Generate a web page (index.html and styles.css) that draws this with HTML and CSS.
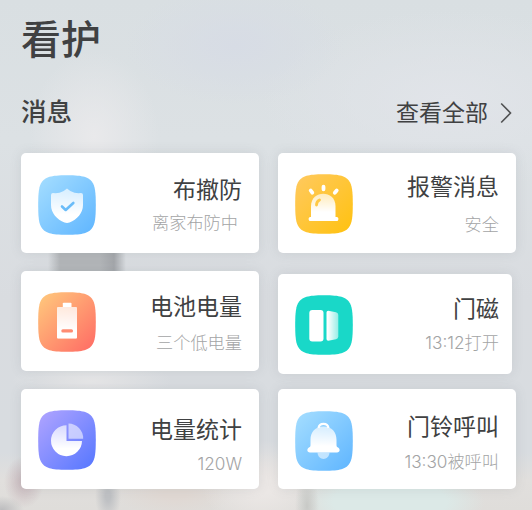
FILE: index.html
```html
<!DOCTYPE html>
<html lang="zh-CN">
<head>
<meta charset="utf-8">
<title>看护</title>
<link rel="stylesheet" href="styles.css">
</head>
<body>
<svg class="defs" width="0" height="0" aria-hidden="true">
  <defs>
    <path id="tile" d="M29 .2C46 .2 50.300 2.300 53.800 6.500C57.200 10.700 57.800 18 57.800 30S57.200 49.300 53.800 53.500C50.300 57.700 46 59.800 29 59.800S7.700 57.700 4.200 53.500C.8 49.300 .2 42 .2 30S.8 10.700 4.200 6.500C7.700 2.300 12 .2 29 .2Z"/>
    <linearGradient id="blue" x1="0" y1="0" x2="1" y2="1"><stop offset=".05" stop-color="#a2dcff"/><stop offset=".95" stop-color="#62b7ff"/></linearGradient>
    <linearGradient id="yellow" x1="0" y1="0" x2="1" y2="1"><stop offset=".05" stop-color="#ffc95c"/><stop offset=".95" stop-color="#ffc213"/></linearGradient>
    <linearGradient id="orange" x1="0" y1="0" x2="1" y2="1"><stop offset=".08" stop-color="#ffc37b"/><stop offset=".92" stop-color="#ff7166"/></linearGradient>
    <linearGradient id="violet" x1="0" y1="0" x2="1" y2="1"><stop offset=".08" stop-color="#aaa1ff"/><stop offset=".92" stop-color="#5c7aff"/></linearGradient>
    <linearGradient id="fade" x1="0" y1="0" x2="0" y2="1"><stop offset="0" stop-color="#fff" stop-opacity=".65"/><stop offset=".75" stop-color="#fff"/></linearGradient>
    <linearGradient id="fade-side"><stop offset=".1" stop-color="#fff"/><stop offset="1" stop-color="#fff" stop-opacity=".55"/></linearGradient>
  </defs>
</svg>
<main class="page">
  <h1 class="page-title">看护</h1>
  <header class="section-head">
    <h2 class="section-title">消息</h2>
    <a class="more"><span>查看全部</span><svg class="chevron" viewBox="0 0 12 22"><path d="M1.200 1.500L10.500 11L1.200 20.500"/></svg></a>
  </header>
  <section class="cards">
    <article class="card arm">
      <svg class="icon" viewBox="0 0 58 60"><use href="#tile" fill="url(#blue)"/><path fill="url(#fade)" d="M29 13.500Q32 16.500 36.500 17.700Q39.500 18.400 43 18Q45 18 45 20V30C45 38 39 44.500 31.500 47.500Q29 48.400 26.500 47.500C19 44.500 13 38 13 30V20Q13 18 15 18Q18.500 18.400 21.500 17.700Q26 16.500 29 13.500Z"/><path fill="none" stroke="#6abcf9" stroke-width="2.600" stroke-linecap="round" stroke-linejoin="round" d="M24 31.500L27.700 35L35.300 28"/></svg>
      <div class="text"><h3>布撤防</h3><p>离家布防中</p></div>
    </article>
    <article class="card alarm">
      <svg class="icon" viewBox="0 0 58 60"><use href="#tile" fill="url(#yellow)"/><path fill="url(#fade)" d="M16 44V32C16 15.500 40.500 15.500 40.500 32V44Z"/><rect x="13.700" y="43" width="29.600" height="4" rx="1.500" fill="#fff"/><path fill="none" stroke="#fff" stroke-width="3.800" stroke-linecap="round" d="M28.500 12.700V15.300M15.700 16.500L17.300 18.700M41.700 16.500L39.800 18.700"/><path fill="none" stroke="#ffc945" stroke-width="2.800" stroke-linecap="round" d="M21.500 31Q21.500 27.500 24.500 26"/></svg>
      <div class="text"><h3>报警消息</h3><p>安全</p></div>
    </article>
    <article class="card battery">
      <svg class="icon" viewBox="0 0 58 60"><use href="#tile" fill="url(#orange)"/><path fill="#fff" d="M25.700 10.700H32.600Q33.500 10.700 33.500 11.600V15H24.800V11.600Q24.800 10.700 25.700 10.700Z"/><rect x="19" y="15" width="20" height="31.500" rx="1" fill="#fff" fill-opacity=".3"/><rect x="19" y="15" width="20" height="31.500" rx="1" fill="url(#fade)"/><rect x="23.300" y="37.300" width="11.700" height="3.200" rx="1.500" fill="#ff8c72"/></svg>
      <div class="text"><h3>电池电量</h3><p>三个低电量</p></div>
    </article>
    <article class="card door">
      <svg class="icon" viewBox="0 0 58 60"><use href="#tile" fill="#19d8c8"/><rect x="14.300" y="15" width="14.200" height="31.500" rx="3" fill="#fff"/><path fill="url(#fade-side)" d="M33.300 15.800L41 17.200Q43.300 17.700 43.300 20V41.500Q43.300 43.700 41 44.200L33.300 45.700Q31.500 45.700 31.500 44V17.500Q31.500 15.800 33.300 15.800Z"/></svg>
      <div class="text"><h3>门磁</h3><p>13:12打开</p></div>
    </article>
    <article class="card usage">
      <svg class="icon" viewBox="0 0 58 60"><use href="#tile" fill="url(#violet)"/><path fill="url(#fade)" d="M28.500 15.200V31H44A15.500 15.500 0 1 1 28.500 15.200Z"/><path fill="#fff" fill-opacity=".56" d="M30.500 13.500A14.800 15 0 0 1 45.200 28.700H30.500Z"/></svg>
      <div class="text"><h3>电量统计</h3><p>120W</p></div>
    </article>
    <article class="card bell">
      <svg class="icon" viewBox="0 0 58 60"><use href="#tile" fill="url(#blue)"/><path fill="none" stroke="#fff" stroke-width="2.200" d="M23.500 17C24.500 11.600 32.500 11.600 33.500 17"/><path fill="#fff" fill-opacity=".55" d="M22.500 41.500H34.500C34 50 23 50 22.500 41.500Z"/><path fill="url(#fade)" d="M28.500 15.500C37 15.500 41.500 21 41.500 29V34.500Q41.500 35.800 43 36.500C45.300 37.500 45.300 41.500 42 41.500H15C11.700 41.500 11.700 37.500 14 36.500Q15.500 35.800 15.500 34.500V29C15.500 21 20 15.500 28.500 15.500Z"/></svg>
      <div class="text"><h3>门铃呼叫</h3><p>13:30被呼叫</p></div>
    </article>
  </section>
</main>
</body>
</html>
```
FILE: styles.css
```css
* {
  box-sizing: border-box;
}

body {
  margin: 0;
  color: #404142;
  font-family: Inter, "Noto Sans CJK SC", sans-serif;
}

h1, h2, h3, p {
  margin: 0;
  font-weight: 400;
}

.defs {
  position: absolute;
}

/* Out-of-focus room photo behind the cards */
.page {
  height: 510px;
  padding: 12px 15px 0 21px;
  overflow: hidden;
  background:
    radial-gradient(ellipse 20px 26px at 24px 482px, rgba(178, 150, 160, .55) 0%, rgba(178, 150, 160, 0) 100%),
    radial-gradient(ellipse 22px 14px at 2px 510px, #bcbcbe 0%, rgba(188, 188, 190, 0) 100%),
    radial-gradient(ellipse 13px 26px at 108px 496px, #bfc1c4 20%, rgba(191, 193, 196, 0) 100%),
    radial-gradient(ellipse 12px 34px at 307px 506px, #c8c9c6 0%, rgba(200, 201, 198, 0) 100%),
    radial-gradient(ellipse 95px 34px at 390px 502px, #dce9e7 60%, rgba(220, 233, 231, 0) 100%),
    radial-gradient(ellipse 60px 45px at 262px 485px, #ebe7e5 20%, rgba(235, 231, 229, 0) 100%),
    radial-gradient(ellipse 60px 22px at 175px 494px, #e0d8d3 20%, rgba(224, 216, 211, 0) 100%),
    linear-gradient(90deg, rgba(175, 179, 182, 0) 48px, #b3b6b9 60px, #b3b6b9 100px, #a4a7ab 114px, rgba(164, 167, 171, 0) 126px) 0 225px / 100% 60px no-repeat,
    radial-gradient(ellipse 65px 85px at 94px 136px, #e9e9eb 0%, rgba(233, 233, 235, 0) 100%),
    radial-gradient(ellipse 80px 20px at 92px 381px, #e7e7e8 0%, rgba(231, 231, 232, 0) 100%),
    radial-gradient(ellipse 110px 60px at 235px 45px, #d7dce5 0%, rgba(215, 220, 229, 0) 100%),
    radial-gradient(ellipse 190px 90px at 450px 100px, #e1e4e9 0%, rgba(225, 228, 233, 0) 100%),
    linear-gradient(180deg, rgba(225, 223, 221, 0) 452px, #e1dfdd 480px, #dfddda 510px),
    linear-gradient(180deg, #d9dfe2 0, #dce1e4 140px, #d9dce0 300px, #d8dce0 430px);
}

.page-title {
  font-size: 40px;
  line-height: 56px;
  font-weight: 500;
}

.section-head {
  display: flex;
  justify-content: space-between;
  height: 40px;
  margin-top: 24px;
}

.section-title {
  font-size: 25.500px;
  line-height: 40px;
  font-weight: 500;
}

.more {
  display: flex;
  align-items: center;
  gap: 12px;
  padding: 2px 5px 0 0;
  font-size: 23px;
  line-height: 38px;
}

.chevron {
  width: 12px;
  height: 22px;
  fill: none;
  stroke: #505152;
  stroke-width: 1.600;
}

.cards {
  display: grid;
  grid-template-columns: 238px 238px;
  grid-auto-rows: 100px;
  gap: 18px 19px;
  margin-top: 21.400px;
}

.card {
  display: flex;
  justify-content: space-between;
  align-items: flex-start;
  height: 100px;
  padding: 0 17px;
  border-radius: 5px;
  background: #fff;
  box-shadow: 0 0 12px rgba(90, 98, 110, .13);
}

.icon {
  width: 58px;
  height: 60px;
  flex: none;
  margin-top: 20.200px;
}

.text {
  text-align: right;
  white-space: nowrap;
}

.text h3 {
  font-size: 23px;
  line-height: 30px;
}

.text p {
  margin-top: 7px;
  color: #a3a4a5;
  font-size: 17.200px;
  line-height: 24px;
  font-weight: 300;
}

.arm .icon { margin-top: 21.600px; }
.arm .text { padding-top: 21.200px; }
.arm p { margin-top: 6px; padding-right: 4px; }

.alarm .text { padding-top: 18.200px; }
.alarm p { margin-top: 11px; }

.battery .text { padding-top: 20.200px; }
.battery p { margin-top: 9px; }

.door {
  width: 234px;
  margin-top: 3px;
  padding-right: 13px;
}
.door .text { padding-top: 19.200px; }

.usage .text { padding-top: 25.200px; }

.bell .icon { margin-top: 21.600px; }
.bell .text { padding-top: 22.200px; }
.bell p { margin-top: 8px; }
```
